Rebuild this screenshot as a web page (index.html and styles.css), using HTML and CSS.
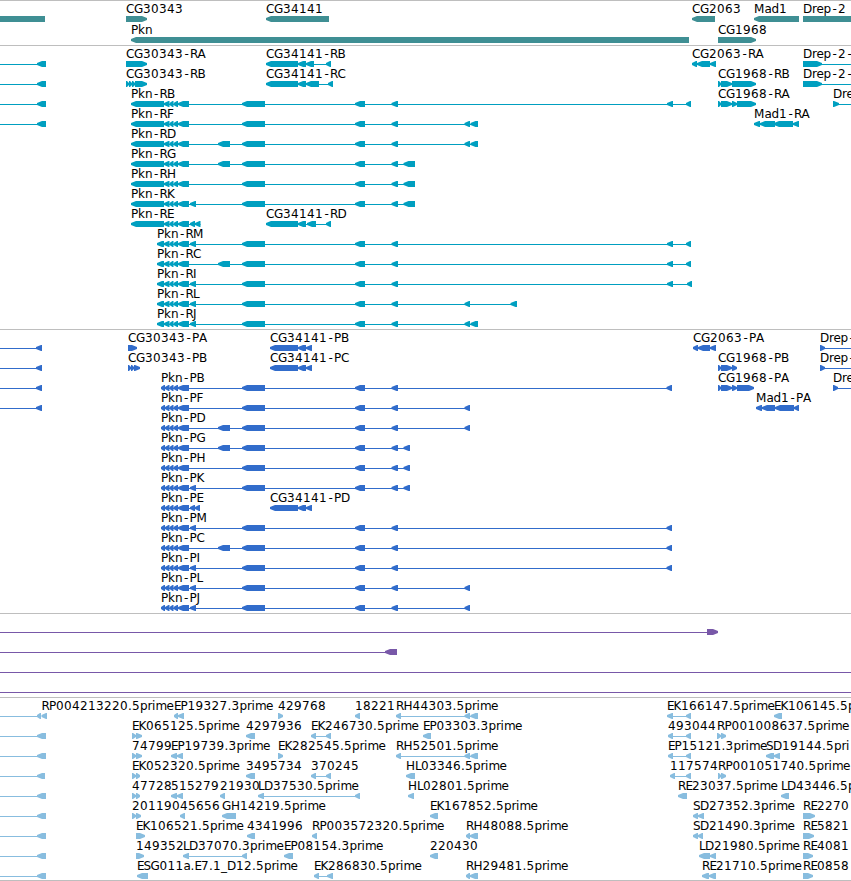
FILE: index.html
```
<!DOCTYPE html>
<html lang="en">
<head>
    <meta charset="UTF-8">
    <title>Genome region: Pkn</title>
    <link rel="stylesheet" href="styles.css">
</head>
<body>
    <main class="browser">
        <section class="track genes" data-track="genes"></section>
        <section class="track transcripts" data-track="transcripts"></section>
        <section class="track proteins" data-track="proteins"></section>
        <section class="track clones" data-track="clones"></section>
        <section class="track ests" data-track="ests"></section>
    </main>
    <script src="tracks.js"></script>
</body>
</html>
```
FILE: styles.css
```
body {
    margin: 0;
    background-color: #fff;
    overflow: hidden;
}
.browser {
    display: flex;
    flex-direction: column;
    border-bottom: 1px solid #bebebe;
}
.track {
    box-sizing: border-box;
    border-top: 1px solid #bebebe;
    height: 284px;
}
.track svg {
    display: block;
    width: 100%;
    height: 100%;
    fill: currentColor;
}
.track text {
    font-family: "DejaVu Sans", sans-serif;
    font-size: 12px;
    fill: #000;
}
.genes {
    height: 45px;
    color: #3f8f94;
}
.transcripts {
    color: #009fc0;
}
.proteins {
    color: #316ccb;
}
.clones {
    height: 84px;
    color: #7858a8;
}
.ests {
    height: 183px;
    color: #88bddf;
}
```
FILE: tracks.js
```
// feature: [row, direction, label, exons]
// direction is '<', '>' or '=' (no arrow head), exons are "start-end" in pixels
var tail = '164-169.5 169.5-173.5 173.5-178 178-189';
var longUtr = '131-164 ' + tail;
var shortUtr = '157-164 ' + tail;
var cds = '161-165 165-169.5 169.5-173.5 173.5-178 178-189';
var mid = ' 242-265 355-365 391.5-398';

var tracks = {
    genes: [
        [0, '=', '', '0-45'],
        [0, '>', 'CG30343', '126-147'],
        [0, '<', 'CG34141', '266-329'],
        [0, '<', 'CG2063', '692-715'],
        [0, '<', 'Mad1', '754-799'],
        [0, '=', 'Drep-2', '803-851'],
        [1, '<', 'Pkn', '131-689'],
        [1, '>', 'CG1968', '718-756']
    ],
    transcripts: [
        [0, '<', '', '0-0 37-46'],
        [1, '<', '', '0-0 37-46'],
        [2, '<', '', '0-0 37-46'],
        [3, '<', '', '0-0 37-46'],
        [0, '>', 'CG30343-RA', '126-147'],
        [1, '>', 'CG30343-RB', '126-129 129-132 132-135 135-147'],
        [0, '<', 'CG34141-RB', '266-298 298-306 306-314 326-331'],
        [1, '<', 'CG34141-RC', '266-298 298-306 306-319 328-333'],
        [8, '<', 'CG34141-RD', '266-298 298-306 307-316 326-331'],
        [2, '<', 'Pkn-RB', longUtr + mid + ' 667-673 686-691'],
        [3, '<', 'Pkn-RF', longUtr + mid + ' 464.5-470 470.5-478'],
        [4, '<', 'Pkn-RD', longUtr + ' 218-230' + mid + ' 464.5-470 470.5-478'],
        [5, '<', 'Pkn-RG', longUtr + ' 218-230' + mid + ' 403.5-415'],
        [6, '<', 'Pkn-RH', longUtr + mid + ' 403.5-415'],
        [7, '<', 'Pkn-RK', longUtr + ' 190-196' + mid + ' 403.5-415'],
        [8, '<', 'Pkn-RE', longUtr + ' 190-195 195-200.5'],
        [9, '<', 'Pkn-RM', shortUtr + ' 190-196' + mid + ' 667-673 686-691'],
        [10, '<', 'Pkn-RC', shortUtr + ' 218-230' + mid + ' 667-673 686-691'],
        [11, '<', 'Pkn-RI', shortUtr + ' 190-196' + mid + ' 667-673 687-692'],
        [12, '<', 'Pkn-RL', shortUtr + ' 190-196' + mid + ' 464.5-470 510.5-517'],
        [13, '<', 'Pkn-RJ', shortUtr + ' 190-196' + mid + ' 464.5-470 470.5-478'],
        [0, '<', 'CG2063-RA', '692-697 697-710 710-716'],
        [1, '>', 'CG1968-RB', '718-721 721-732 732-756'],
        [2, '>', 'CG1968-RA', '718-721 721-732 732-737 737-756'],
        [3, '<', 'Mad1-RA', '754-760 760-775 774-793 793-799'],
        [0, '>', 'Drep-2-', '803-822 860-870'],
        [1, '>', 'Drep-2-', '803-822 860-870'],
        [2, '>', 'Dre', '833-839 860-870']
    ],
    proteins: [
        [0, '<', '', '0-0 36-42'],
        [1, '<', '', '0-0 36-42'],
        [2, '<', '', '0-0 36-42'],
        [3, '<', '', '0-0 36-42'],
        [0, '>', 'CG30343-PA', '128-137'],
        [1, '>', 'CG30343-PB', '128-131 131-134 134-140'],
        [0, '<', 'CG34141-PB', '270-298 298-306 306-312'],
        [1, '<', 'CG34141-PC', '270-298 298-306 306-312'],
        [8, '<', 'CG34141-PD', '270-298 298-306 306-312'],
        [2, '<', 'Pkn-PB', cds + mid + ' 666.5-672'],
        [3, '<', 'Pkn-PF', cds + mid + ' 464.5-470'],
        [4, '<', 'Pkn-PD', cds + ' 218-230' + mid + ' 464.5-470'],
        [5, '<', 'Pkn-PG', cds + ' 218-230' + mid + ' 403.5-410'],
        [6, '<', 'Pkn-PH', cds + mid + ' 403.5-410'],
        [7, '<', 'Pkn-PK', cds + ' 190-196' + mid + ' 403.5-410'],
        [8, '<', 'Pkn-PE', cds + ' 190-195 195-200'],
        [9, '<', 'Pkn-PM', cds + ' 190-196' + mid + ' 666.5-672'],
        [10, '<', 'Pkn-PC', cds + ' 218-230' + mid + ' 666.5-672'],
        [11, '<', 'Pkn-PI', cds + ' 190-196' + mid + ' 666.5-672'],
        [12, '<', 'Pkn-PL', cds + ' 190-196' + mid + ' 464.5-470'],
        [13, '<', 'Pkn-PJ', cds + ' 190-196' + mid + ' 464.5-470'],
        [0, '<', 'CG2063-PA', '693-698 698-710 710-716'],
        [1, '>', 'CG1968-PB', '718-721 721-732 732-737'],
        [2, '>', 'CG1968-PA', '718-721 721-732 732-737 737-754'],
        [3, '<', 'Mad1-PA', '756-762 762-775 775-794 794-799'],
        [0, '>', 'Drep-', '820-825 860-870'],
        [1, '>', 'Drep-', '820-825 860-870'],
        [2, '>', 'Dre', '833-838 860-870']
    ],
    clones: [
        [0, '>', '', '0-0 707-718'],
        [1, '<', '', '0-0 385-397'],
        [2, '<', '', '0-0 860-870'],
        [3, '<', '', '0-0 860-870']
    ],
    ests: [
        [0, '<', '', '0-0 37-41'],
        [0, '<', 'RP004213220.5prime', '41.5-47'],
        [0, '<', 'EP19327.3prime', '174-178 178-184'],
        [0, '>', '429768', '278-283'],
        [0, '<', '18221', '355-360'],
        [0, '<', 'RH44303.5prime', '396-401 464.5-470 470.5-478'],
        [0, '<', 'EK166147.5prime', '667-673 686-691'],
        [0, '<', 'EK106145.5p', '774-782'],
        [1, '<', '', '0-0 37-46'],
        [1, '>', 'EK065125.5prime', '132-136 136-142'],
        [1, '<', '4297936', '246-255'],
        [1, '<', 'EK246730.5prime', '311-316 326-331'],
        [1, '<', 'EP03303.3prime', '423-431'],
        [1, '<', '493044', '668-673 686-691'],
        [1, '>', 'RP001008637.5prime', '717-721 721-726'],
        [2, '<', '', '0-0 37-46'],
        [2, '>', '74799', '132-136 136-142'],
        [2, '<', 'EP19739.3prime', '171-177 177-183'],
        [2, '>', 'EK282545.5prime', '278-283'],
        [2, '<', 'RH52501.5prime', '396-401 464.5-470 470.5-478'],
        [2, '<', 'EP15121.3prime', '668-673 686-691'],
        [2, '<', 'SD19144.5pri', '766-774 774-780'],
        [3, '<', '', '0-0 37-45'],
        [3, '>', 'EK052320.5prime', '132-136 136-140'],
        [3, '<', '3495734', '246-255'],
        [3, '<', '370245', '311-316 326-331'],
        [3, '<', 'HL03346.5prime', '406-415'],
        [3, '<', '117574', '670-675 686-691'],
        [3, '>', 'RP001051740.5prime', '718-721 721-726'],
        [4, '<', '', '0-0 37-46'],
        [4, '>', '47728', '132-136 136-140'],
        [4, '<', '515279', '171-177 177-183'],
        [4, '<', '21930', '220-225'],
        [4, '<', 'LD37530.5prime', '258-264 355-360'],
        [4, '<', 'HL02801.5prime', '408-414'],
        [4, '<', 'RE23037.5prime', '678-687'],
        [4, '<', 'LD43446.5p', '781-789'],
        [5, '<', '', '0-0 37-46'],
        [5, '>', '201190', '132-136 136-141'],
        [5, '<', '45656', '180-185'],
        [5, '<', 'GH14219.5prime', '222-236'],
        [5, '<', 'EK167852.5prime', '430-438'],
        [5, '<', 'SD27352.3prime', '693-698 698-704'],
        [5, '>', 'RE2270', '803-815'],
        [6, '<', '', '0-0 37-46'],
        [6, '>', 'EK106521.5prime', '136-145'],
        [6, '<', '4341996', '247-255'],
        [6, '<', 'RP003572320.5prime', '312-317'],
        [6, '<', 'RH48088.5prime', '466-470 470-478'],
        [6, '<', 'SD21490.3prime', '693-698 698-703'],
        [6, '>', 'RE5821', '803-814'],
        [7, '<', '', '0-0 37-46'],
        [7, '>', '149352', '136-144'],
        [7, '<', 'LD37070.3prime', '183-189 242-247'],
        [7, '<', 'EP08154.3prime', '284-293'],
        [7, '<', '220430', '430-438'],
        [7, '<', 'LD21980.5prime', '699-710 710-716'],
        [7, '>', 'RE4081', '803-813'],
        [8, '<', '', '0-0 37-46'],
        [8, '<', 'ESG011a.E7.1_D12.5prime', '137-148'],
        [8, '<', 'EK286830.5prime', '314-319 327-333'],
        [8, '<', 'RH29481.5prime', '466-470 470-478'],
        [8, '<', 'RE21710.5prime', '702-709 709-716'],
        [8, '>', 'RE0858', '803-813']
    ]
};

// label advance per letter, digits are all 8px
var widths = {
    C: 8, G: 9, R: 7.5, P: 7, E: 6.5, K: 7.5, L: 6, D: 9, H: 9, S: 7, M: 10.5, B: 7, A: 8,
    F: 6.5, J: 4, I: 4, k: 7, n: 7.5, p: 7.5, r: 4.5, i: 3.5, m: 11, e: 7, a: 7, d: 7.5,
    '-': 7, '.': 4, '_': 6
};

function labelSvg(label, x, y) {
    var xs = [];
    for (var i = 0; i < label.length; i++) {
        // the hyphen is narrow, keep it in the middle of its cell
        xs.push(label[i] === '-' ? x + 1.5 : x);
        x += widths[label[i]] || 8;
    }
    return '<text x="' + xs.join(' ') + '" y="' + y + '">' + label + '</text>';
}

function exonSvg(dir, x0, x1, y) {
    var head = dir === '=' ? 0 : Math.min(5, x1 - x0 - 1);
    var base = dir === '>' ? x1 - head : x0 + head;
    var tip = dir === '>' ? x1 : x0;
    var back = dir === '>' ? x0 : x1;
    var points = [[tip, y + 2], [base, y], [back, y], [back, y + 6], [base, y + 6], [tip, y + 4]];
    return '<polygon points="' + points.join(' ') + '"/>';
}

document.querySelectorAll('.track').forEach(function (el) {
    var name = el.dataset.track;
    var pitch = name === 'genes' ? 21 : 20;
    var svg = '';
    tracks[name].forEach(function (f) {
        var y = f[0] * pitch + 15;
        var exons = f[3].split(' ').map(function (e) { return e.split('-').map(Number); });
        var start = exons[0][0];
        var end = exons[exons.length - 1][1];
        if (exons.length > 1) {
            svg += '<rect x="' + start + '" y="' + (y + 3) + '" width="' + (end - start) + '" height="1"/>';
        }
        exons.forEach(function (e) {
            if (e[1] > e[0]) svg += exonSvg(f[1], e[0], e[1], y);
        });
        if (f[2]) svg += labelSvg(f[2], start, y - 3);
    });
    el.innerHTML = '<svg>' + svg + '</svg>';
});
```
